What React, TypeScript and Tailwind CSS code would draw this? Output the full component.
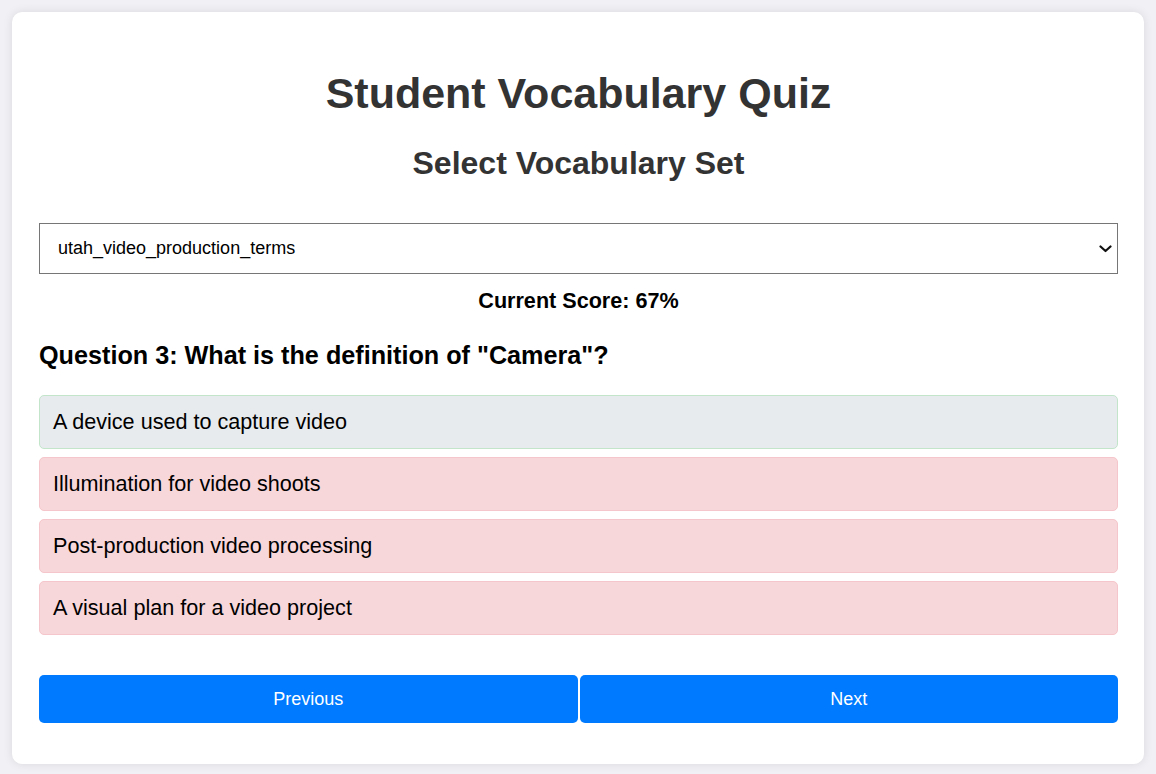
import React, { useState } from 'react';

const sets = ['utah_video_production_terms', 'basic_film_terms', 'audio_terms'];

const options = [
  { text: 'A device used to capture video', correct: true },
  { text: 'Illumination for video shoots', correct: false },
  { text: 'Post-production video processing', correct: false },
  { text: 'A visual plan for a video project', correct: false },
];

export default function App() {
  const [set, setSet] = useState(sets[0]);

  return (
    <div className="min-h-screen bg-[#f0f0f5] pt-[12px] px-[12px] pb-[10px] font-['Liberation_Sans',Arial,sans-serif]">
      <div className="bg-white rounded-[10px] shadow-[0_0_10px_rgba(0,0,0,0.1)] pl-[27px] pr-[26px] pt-[58px] pb-[41px]">
        <h1 className="text-center text-[43px] leading-[46px] font-bold text-[#333]">Student Vocabulary Quiz</h1>
        <h2 className="mt-[29px] text-center text-[32px] leading-[36px] font-bold text-[#333]">Select Vocabulary Set</h2>

        {/* Vocabulary set picker */}
        <div className="relative mt-[42px]">
          <select
            value={set}
            onChange={e => setSet(e.target.value)}
            className="appearance-none block w-full h-[51px] border border-[#767676] bg-white pl-[18px] pr-[30px] text-[18px] text-black outline-none"
          >
            {sets.map(s => (
              <option key={s} value={s}>{s}</option>
            ))}
          </select>
          <svg
            className="pointer-events-none absolute right-[6px] top-1/2 -translate-y-1/2"
            width="13"
            height="8"
            viewBox="0 0 13 8"
            fill="none"
          >
            <polyline points="1.5,1.5 6.5,6 11.5,1.5" stroke="#111" strokeWidth="2.2" strokeLinecap="round" strokeLinejoin="round" />
          </svg>
        </div>

        <p className="mt-[14px] text-center text-[21.6px] leading-[26px] font-bold text-black">Current Score: 67%</p>

        <h3 className="mt-[27px] text-[25.2px] leading-[29px] font-bold text-black">Question 3: What is the definition of "Camera"?</h3>

        <div className="mt-[25px] flex flex-col gap-[8px]">
          {options.map(o => (
            <div
              key={o.text}
              className={`h-[54px] flex items-center px-[13px] rounded-[5px] border text-[21.6px] text-black ${
                o.correct ? 'bg-[#e8ebee] border-[#c3e6cb]' : 'bg-[#f8d7da] border-[#f5c6cb]'
              }`}
            >
              {o.text}
            </div>
          ))}
        </div>

        <div className="mt-[40px] flex gap-[2px]">
          <button className="flex-1 h-[48px] rounded-[5px] bg-[#007bff] text-white text-[18px]">Previous</button>
          <button className="flex-1 h-[48px] rounded-[5px] bg-[#007bff] text-white text-[18px]">Next</button>
        </div>
      </div>
    </div>
  );
}
